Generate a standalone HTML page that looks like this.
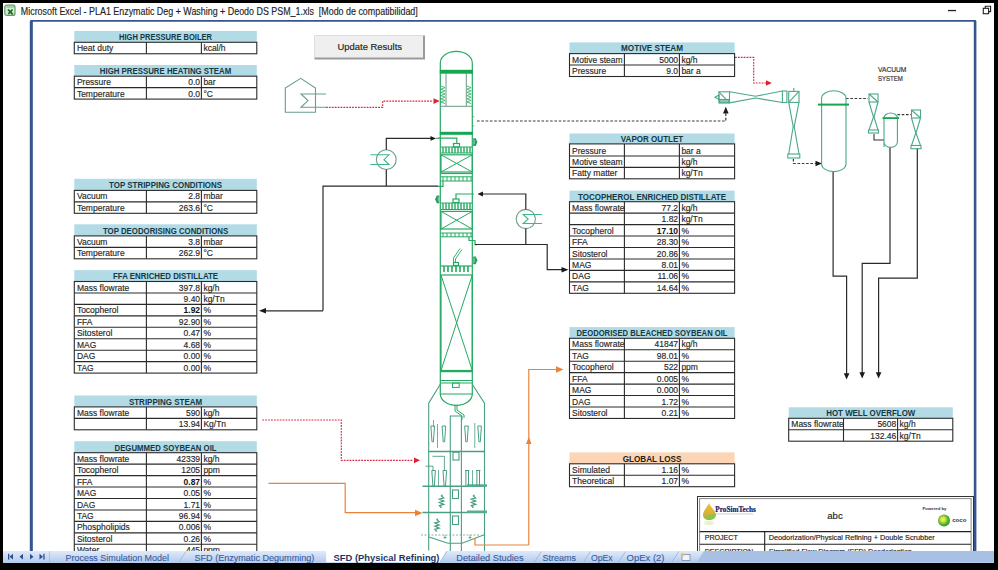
<!DOCTYPE html>
<html><head><meta charset="utf-8"><style>
html,body{margin:0;padding:0;background:#000;width:998px;height:570px;overflow:hidden}
svg{position:absolute;left:0;top:0;display:block}
.t{font-family:"Liberation Sans",sans-serif;fill:#262626;stroke:#262626;stroke-width:0.15px}
.tb{font-family:"Liberation Sans",sans-serif;fill:#111;font-weight:bold}
.h{font-family:"Liberation Sans",sans-serif;font-weight:bold}
</style></head><body>
<svg width="998" height="570" viewBox="0 0 998 570">
<rect x="0" y="0" width="998" height="570" fill="#000"/>
<rect x="3" y="3" width="991" height="560" fill="#fff"/>
<text x="20.8" y="14.8" class="t" style="font-size:10.4px;fill:#1a1a1a;white-space:pre" textLength="397" lengthAdjust="spacingAndGlyphs">Microsoft Excel - PLA1 Enzymatic Deg + Washing + Deodo DS PSM_1.xls  [Modo de compatibilidad]</text>
<rect x="4.8" y="5.2" width="10.2" height="10.2" rx="2" fill="#d2ecd0" stroke="#5f9f62" stroke-width="1.2"/>
<path d="M6.5 7 H14" stroke="#7ab47c" stroke-width="1"/><path d="M8 9.5 L12.8 14.3 M12.5 9.5 L8.3 14" stroke="#1f5f26" stroke-width="1.7"/>
<rect x="948" y="9.9" width="8" height="1.3" fill="#222"/>
<rect x="983.3" y="8.3" width="5.3" height="5.4" fill="none" stroke="#222" stroke-width="1.1"/>
<path d="M985.3 8.3 V6.3 H990.6 V11.6 H988.6" fill="none" stroke="#222" stroke-width="1.1"/>
<path d="M31.3 551 V20.8 H975 V551" fill="none" stroke="#34568e" stroke-width="1.8"/>
<rect x="29.8" y="20.8" width="3" height="531" fill="#34568e"/>
<rect x="973.8" y="20.8" width="2.6" height="531" fill="#34568e"/>
<rect x="74.3" y="30.9" width="182.5" height="11.399999999999999" fill="#b2dbe6"/>
<text x="165.55" y="40.099999999999994" text-anchor="middle" class="h" style="font-size:8.9px" fill="#163845" textLength="93" lengthAdjust="spacingAndGlyphs">HIGH PRESSURE BOILER</text>
<rect x="74.3" y="42.3" width="182.5" height="11.450000000000003" fill="#fff" stroke="#2b2b2b" stroke-width="1.1"/>
<line x1="146.4" y1="42.3" x2="146.4" y2="53.75" stroke="#2b2b2b" stroke-width="1.1"/>
<line x1="201.4" y1="42.3" x2="201.4" y2="53.75" stroke="#2b2b2b" stroke-width="1.1"/>
<text x="76.89999999999999" y="51.35" class="t" style="font-size:9.0px" textLength="36.38" lengthAdjust="spacingAndGlyphs">Heat duty</text>
<text x="203.4" y="51.35" class="t" style="font-size:9.0px" textLength="22.2" lengthAdjust="spacingAndGlyphs">kcal/h</text>
<rect x="74.3" y="65" width="182.5" height="11.200000000000003" fill="#b2dbe6"/>
<text x="165.55" y="74.0" text-anchor="middle" class="h" style="font-size:8.9px" fill="#163845" textLength="131.5" lengthAdjust="spacingAndGlyphs">HIGH PRESSURE HEATING STEAM</text>
<rect x="74.3" y="76.2" width="182.5" height="22.89999999999999" fill="#fff" stroke="#2b2b2b" stroke-width="1.1"/>
<line x1="74.3" y1="87.65" x2="256.8" y2="87.65" stroke="#2b2b2b" stroke-width="1.1"/>
<line x1="146.4" y1="76.2" x2="146.4" y2="99.1" stroke="#2b2b2b" stroke-width="1.1"/>
<line x1="201.4" y1="76.2" x2="201.4" y2="99.1" stroke="#2b2b2b" stroke-width="1.1"/>
<text x="76.89999999999999" y="85.25" class="t" style="font-size:9.0px" textLength="34.01" lengthAdjust="spacingAndGlyphs">Pressure</text>
<text x="200.1" y="85.25" text-anchor="end" class="t" style="font-size:9.0px" textLength="11.82" lengthAdjust="spacingAndGlyphs">0.0</text>
<text x="203.4" y="85.25" class="t" style="font-size:9.0px" textLength="12.29" lengthAdjust="spacingAndGlyphs">bar</text>
<text x="76.89999999999999" y="96.69999999999999" class="t" style="font-size:9.0px" textLength="47.72" lengthAdjust="spacingAndGlyphs">Temperature</text>
<text x="200.1" y="96.69999999999999" text-anchor="end" class="t" style="font-size:9.0px" textLength="11.82" lengthAdjust="spacingAndGlyphs">0.0</text>
<text x="203.4" y="96.69999999999999" class="t" style="font-size:9.0px" textLength="9.54" lengthAdjust="spacingAndGlyphs">°C</text>
<rect x="74.3" y="178.8" width="182.5" height="11.599999999999994" fill="#b2dbe6"/>
<text x="165.55" y="188.20000000000002" text-anchor="middle" class="h" style="font-size:8.9px" fill="#163845" textLength="113" lengthAdjust="spacingAndGlyphs">TOP STRIPPING CONDITIONS</text>
<rect x="74.3" y="190.4" width="182.5" height="22.900000000000006" fill="#fff" stroke="#2b2b2b" stroke-width="1.1"/>
<line x1="74.3" y1="201.85" x2="256.8" y2="201.85" stroke="#2b2b2b" stroke-width="1.1"/>
<line x1="146.4" y1="190.4" x2="146.4" y2="213.3" stroke="#2b2b2b" stroke-width="1.1"/>
<line x1="201.4" y1="190.4" x2="201.4" y2="213.3" stroke="#2b2b2b" stroke-width="1.1"/>
<text x="76.89999999999999" y="199.45" class="t" style="font-size:9.0px" textLength="30.55" lengthAdjust="spacingAndGlyphs">Vacuum</text>
<text x="200.1" y="199.45" text-anchor="end" class="t" style="font-size:9.0px" textLength="11.82" lengthAdjust="spacingAndGlyphs">2.8</text>
<text x="203.4" y="199.45" class="t" style="font-size:9.0px" textLength="19.37" lengthAdjust="spacingAndGlyphs">mbar</text>
<text x="76.89999999999999" y="210.9" class="t" style="font-size:9.0px" textLength="47.72" lengthAdjust="spacingAndGlyphs">Temperature</text>
<text x="200.1" y="210.9" text-anchor="end" class="t" style="font-size:9.0px" textLength="21.27" lengthAdjust="spacingAndGlyphs">263.6</text>
<text x="203.4" y="210.9" class="t" style="font-size:9.0px" textLength="9.54" lengthAdjust="spacingAndGlyphs">°C</text>
<rect x="74.3" y="224.3" width="182.5" height="11.599999999999994" fill="#b2dbe6"/>
<text x="165.55" y="233.70000000000002" text-anchor="middle" class="h" style="font-size:8.9px" fill="#163845" textLength="125.3" lengthAdjust="spacingAndGlyphs">TOP DEODORISING CONDITIONS</text>
<rect x="74.3" y="235.9" width="182.5" height="22.900000000000006" fill="#fff" stroke="#2b2b2b" stroke-width="1.1"/>
<line x1="74.3" y1="247.35" x2="256.8" y2="247.35" stroke="#2b2b2b" stroke-width="1.1"/>
<line x1="146.4" y1="235.9" x2="146.4" y2="258.8" stroke="#2b2b2b" stroke-width="1.1"/>
<line x1="201.4" y1="235.9" x2="201.4" y2="258.8" stroke="#2b2b2b" stroke-width="1.1"/>
<text x="76.89999999999999" y="244.95" class="t" style="font-size:9.0px" textLength="30.55" lengthAdjust="spacingAndGlyphs">Vacuum</text>
<text x="200.1" y="244.95" text-anchor="end" class="t" style="font-size:9.0px" textLength="11.82" lengthAdjust="spacingAndGlyphs">3.8</text>
<text x="203.4" y="244.95" class="t" style="font-size:9.0px" textLength="19.37" lengthAdjust="spacingAndGlyphs">mbar</text>
<text x="76.89999999999999" y="256.40000000000003" class="t" style="font-size:9.0px" textLength="47.72" lengthAdjust="spacingAndGlyphs">Temperature</text>
<text x="200.1" y="256.40000000000003" text-anchor="end" class="t" style="font-size:9.0px" textLength="21.27" lengthAdjust="spacingAndGlyphs">262.9</text>
<text x="203.4" y="256.40000000000003" class="t" style="font-size:9.0px" textLength="9.54" lengthAdjust="spacingAndGlyphs">°C</text>
<rect x="74.3" y="270.1" width="182.5" height="11.399999999999977" fill="#b2dbe6"/>
<text x="165.55" y="279.3" text-anchor="middle" class="h" style="font-size:8.9px" fill="#163845" textLength="105" lengthAdjust="spacingAndGlyphs">FFA ENRICHED DISTILLATE</text>
<rect x="74.3" y="281.5" width="182.5" height="91.60000000000002" fill="#fff" stroke="#2b2b2b" stroke-width="1.1"/>
<line x1="74.3" y1="292.95" x2="256.8" y2="292.95" stroke="#2b2b2b" stroke-width="1.1"/>
<line x1="74.3" y1="304.4" x2="256.8" y2="304.4" stroke="#2b2b2b" stroke-width="1.1"/>
<line x1="74.3" y1="315.85" x2="256.8" y2="315.85" stroke="#2b2b2b" stroke-width="1.1"/>
<line x1="74.3" y1="327.3" x2="256.8" y2="327.3" stroke="#2b2b2b" stroke-width="1.1"/>
<line x1="74.3" y1="338.75" x2="256.8" y2="338.75" stroke="#2b2b2b" stroke-width="1.1"/>
<line x1="74.3" y1="350.2" x2="256.8" y2="350.2" stroke="#2b2b2b" stroke-width="1.1"/>
<line x1="74.3" y1="361.65" x2="256.8" y2="361.65" stroke="#2b2b2b" stroke-width="1.1"/>
<line x1="146.4" y1="281.5" x2="146.4" y2="373.1" stroke="#2b2b2b" stroke-width="1.1"/>
<line x1="201.4" y1="281.5" x2="201.4" y2="373.1" stroke="#2b2b2b" stroke-width="1.1"/>
<text x="76.89999999999999" y="290.55" class="t" style="font-size:9.0px" textLength="52.43" lengthAdjust="spacingAndGlyphs">Mass flowrate</text>
<text x="200.1" y="290.55" text-anchor="end" class="t" style="font-size:9.0px" textLength="21.27" lengthAdjust="spacingAndGlyphs">397.8</text>
<text x="203.4" y="290.55" class="t" style="font-size:9.0px" textLength="16.07" lengthAdjust="spacingAndGlyphs">kg/h</text>
<text x="200.1" y="302.0" text-anchor="end" class="t" style="font-size:9.0px" textLength="16.54" lengthAdjust="spacingAndGlyphs">9.40</text>
<text x="203.4" y="302.0" class="t" style="font-size:9.0px" textLength="21.26" lengthAdjust="spacingAndGlyphs">kg/Tn</text>
<text x="76.89999999999999" y="313.45000000000005" class="t" style="font-size:9.0px" textLength="41.58" lengthAdjust="spacingAndGlyphs">Tocopherol</text>
<text x="200.1" y="313.45000000000005" text-anchor="end" class="tb" style="font-size:9.0px" textLength="16.54" lengthAdjust="spacingAndGlyphs">1.92</text>
<text x="203.4" y="313.45000000000005" class="t" style="font-size:9.0px" textLength="7.56" lengthAdjust="spacingAndGlyphs">%</text>
<text x="76.89999999999999" y="324.90000000000003" class="t" style="font-size:9.0px" textLength="15.58" lengthAdjust="spacingAndGlyphs">FFA</text>
<text x="200.1" y="324.90000000000003" text-anchor="end" class="t" style="font-size:9.0px" textLength="21.27" lengthAdjust="spacingAndGlyphs">92.90</text>
<text x="203.4" y="324.90000000000003" class="t" style="font-size:9.0px" textLength="7.56" lengthAdjust="spacingAndGlyphs">%</text>
<text x="76.89999999999999" y="336.35" class="t" style="font-size:9.0px" textLength="35.43" lengthAdjust="spacingAndGlyphs">Sitosterol</text>
<text x="200.1" y="336.35" text-anchor="end" class="t" style="font-size:9.0px" textLength="16.54" lengthAdjust="spacingAndGlyphs">0.47</text>
<text x="203.4" y="336.35" class="t" style="font-size:9.0px" textLength="7.56" lengthAdjust="spacingAndGlyphs">%</text>
<text x="76.89999999999999" y="347.8" class="t" style="font-size:9.0px" textLength="19.36" lengthAdjust="spacingAndGlyphs">MAG</text>
<text x="200.1" y="347.8" text-anchor="end" class="t" style="font-size:9.0px" textLength="16.54" lengthAdjust="spacingAndGlyphs">4.68</text>
<text x="203.4" y="347.8" class="t" style="font-size:9.0px" textLength="7.56" lengthAdjust="spacingAndGlyphs">%</text>
<text x="76.89999999999999" y="359.25" class="t" style="font-size:9.0px" textLength="18.42" lengthAdjust="spacingAndGlyphs">DAG</text>
<text x="200.1" y="359.25" text-anchor="end" class="t" style="font-size:9.0px" textLength="16.54" lengthAdjust="spacingAndGlyphs">0.00</text>
<text x="203.4" y="359.25" class="t" style="font-size:9.0px" textLength="7.56" lengthAdjust="spacingAndGlyphs">%</text>
<text x="76.89999999999999" y="370.70000000000005" class="t" style="font-size:9.0px" textLength="16.84" lengthAdjust="spacingAndGlyphs">TAG</text>
<text x="200.1" y="370.70000000000005" text-anchor="end" class="t" style="font-size:9.0px" textLength="16.54" lengthAdjust="spacingAndGlyphs">0.00</text>
<text x="203.4" y="370.70000000000005" class="t" style="font-size:9.0px" textLength="7.56" lengthAdjust="spacingAndGlyphs">%</text>
<rect x="74.3" y="395.5" width="182.5" height="11.399999999999977" fill="#b2dbe6"/>
<text x="165.55" y="404.7" text-anchor="middle" class="h" style="font-size:8.9px" fill="#163845" textLength="73.3" lengthAdjust="spacingAndGlyphs">STRIPPING STEAM</text>
<rect x="74.3" y="406.9" width="182.5" height="22.899999999999977" fill="#fff" stroke="#2b2b2b" stroke-width="1.1"/>
<line x1="74.3" y1="418.34999999999997" x2="256.8" y2="418.34999999999997" stroke="#2b2b2b" stroke-width="1.1"/>
<line x1="146.4" y1="406.9" x2="146.4" y2="429.79999999999995" stroke="#2b2b2b" stroke-width="1.1"/>
<line x1="201.4" y1="406.9" x2="201.4" y2="429.79999999999995" stroke="#2b2b2b" stroke-width="1.1"/>
<text x="76.89999999999999" y="415.95" class="t" style="font-size:9.0px" textLength="52.43" lengthAdjust="spacingAndGlyphs">Mass flowrate</text>
<text x="200.1" y="415.95" text-anchor="end" class="t" style="font-size:9.0px" textLength="14.18" lengthAdjust="spacingAndGlyphs">590</text>
<text x="203.4" y="415.95" class="t" style="font-size:9.0px" textLength="16.07" lengthAdjust="spacingAndGlyphs">kg/h</text>
<text x="200.1" y="427.4" text-anchor="end" class="t" style="font-size:9.0px" textLength="21.27" lengthAdjust="spacingAndGlyphs">13.94</text>
<text x="203.4" y="427.4" class="t" style="font-size:9.0px" textLength="22.68" lengthAdjust="spacingAndGlyphs">Kg/Tn</text>
<rect x="74.3" y="441.2" width="182.5" height="11.5" fill="#b2dbe6"/>
<text x="165.55" y="450.5" text-anchor="middle" class="h" style="font-size:8.9px" fill="#163845" textLength="102" lengthAdjust="spacingAndGlyphs">DEGUMMED SOYBEAN OIL</text>
<rect x="74.3" y="452.7" width="182.5" height="103.05000000000001" fill="#fff" stroke="#2b2b2b" stroke-width="1.1"/>
<line x1="74.3" y1="464.15" x2="256.8" y2="464.15" stroke="#2b2b2b" stroke-width="1.1"/>
<line x1="74.3" y1="475.59999999999997" x2="256.8" y2="475.59999999999997" stroke="#2b2b2b" stroke-width="1.1"/>
<line x1="74.3" y1="487.04999999999995" x2="256.8" y2="487.04999999999995" stroke="#2b2b2b" stroke-width="1.1"/>
<line x1="74.3" y1="498.5" x2="256.8" y2="498.5" stroke="#2b2b2b" stroke-width="1.1"/>
<line x1="74.3" y1="509.95" x2="256.8" y2="509.95" stroke="#2b2b2b" stroke-width="1.1"/>
<line x1="74.3" y1="521.4" x2="256.8" y2="521.4" stroke="#2b2b2b" stroke-width="1.1"/>
<line x1="74.3" y1="532.85" x2="256.8" y2="532.85" stroke="#2b2b2b" stroke-width="1.1"/>
<line x1="74.3" y1="544.3" x2="256.8" y2="544.3" stroke="#2b2b2b" stroke-width="1.1"/>
<line x1="146.4" y1="452.7" x2="146.4" y2="555.75" stroke="#2b2b2b" stroke-width="1.1"/>
<line x1="201.4" y1="452.7" x2="201.4" y2="555.75" stroke="#2b2b2b" stroke-width="1.1"/>
<text x="76.89999999999999" y="461.75" class="t" style="font-size:9.0px" textLength="52.43" lengthAdjust="spacingAndGlyphs">Mass flowrate</text>
<text x="200.1" y="461.75" text-anchor="end" class="t" style="font-size:9.0px" textLength="23.64" lengthAdjust="spacingAndGlyphs">42339</text>
<text x="203.4" y="461.75" class="t" style="font-size:9.0px" textLength="16.07" lengthAdjust="spacingAndGlyphs">kg/h</text>
<text x="76.89999999999999" y="473.2" class="t" style="font-size:9.0px" textLength="41.58" lengthAdjust="spacingAndGlyphs">Tocopherol</text>
<text x="200.1" y="473.2" text-anchor="end" class="t" style="font-size:9.0px" textLength="18.91" lengthAdjust="spacingAndGlyphs">1205</text>
<text x="203.4" y="473.2" class="t" style="font-size:9.0px" textLength="16.54" lengthAdjust="spacingAndGlyphs">ppm</text>
<text x="76.89999999999999" y="484.65" class="t" style="font-size:9.0px" textLength="15.58" lengthAdjust="spacingAndGlyphs">FFA</text>
<text x="200.1" y="484.65" text-anchor="end" class="tb" style="font-size:9.0px" textLength="16.54" lengthAdjust="spacingAndGlyphs">0.87</text>
<text x="203.4" y="484.65" class="t" style="font-size:9.0px" textLength="7.56" lengthAdjust="spacingAndGlyphs">%</text>
<text x="76.89999999999999" y="496.1" class="t" style="font-size:9.0px" textLength="19.36" lengthAdjust="spacingAndGlyphs">MAG</text>
<text x="200.1" y="496.1" text-anchor="end" class="t" style="font-size:9.0px" textLength="16.54" lengthAdjust="spacingAndGlyphs">0.05</text>
<text x="203.4" y="496.1" class="t" style="font-size:9.0px" textLength="7.56" lengthAdjust="spacingAndGlyphs">%</text>
<text x="76.89999999999999" y="507.55" class="t" style="font-size:9.0px" textLength="18.42" lengthAdjust="spacingAndGlyphs">DAG</text>
<text x="200.1" y="507.55" text-anchor="end" class="t" style="font-size:9.0px" textLength="16.54" lengthAdjust="spacingAndGlyphs">1.71</text>
<text x="203.4" y="507.55" class="t" style="font-size:9.0px" textLength="7.56" lengthAdjust="spacingAndGlyphs">%</text>
<text x="76.89999999999999" y="519.0" class="t" style="font-size:9.0px" textLength="16.84" lengthAdjust="spacingAndGlyphs">TAG</text>
<text x="200.1" y="519.0" text-anchor="end" class="t" style="font-size:9.0px" textLength="21.27" lengthAdjust="spacingAndGlyphs">96.94</text>
<text x="203.4" y="519.0" class="t" style="font-size:9.0px" textLength="7.56" lengthAdjust="spacingAndGlyphs">%</text>
<text x="76.89999999999999" y="530.45" class="t" style="font-size:9.0px" textLength="52.93" lengthAdjust="spacingAndGlyphs">Phospholipids</text>
<text x="200.1" y="530.45" text-anchor="end" class="t" style="font-size:9.0px" textLength="21.27" lengthAdjust="spacingAndGlyphs">0.006</text>
<text x="203.4" y="530.45" class="t" style="font-size:9.0px" textLength="7.56" lengthAdjust="spacingAndGlyphs">%</text>
<text x="76.89999999999999" y="541.9" class="t" style="font-size:9.0px" textLength="35.43" lengthAdjust="spacingAndGlyphs">Sitosterol</text>
<text x="200.1" y="541.9" text-anchor="end" class="t" style="font-size:9.0px" textLength="16.54" lengthAdjust="spacingAndGlyphs">0.26</text>
<text x="203.4" y="541.9" class="t" style="font-size:9.0px" textLength="7.56" lengthAdjust="spacingAndGlyphs">%</text>
<text x="76.89999999999999" y="553.35" class="t" style="font-size:9.0px" textLength="22.35" lengthAdjust="spacingAndGlyphs">Water</text>
<text x="200.1" y="553.35" text-anchor="end" class="t" style="font-size:9.0px" textLength="14.18" lengthAdjust="spacingAndGlyphs">445</text>
<text x="203.4" y="553.35" class="t" style="font-size:9.0px" textLength="16.54" lengthAdjust="spacingAndGlyphs">ppm</text>
<rect x="569.5" y="42.4" width="165.10000000000002" height="11.200000000000003" fill="#b2dbe6"/>
<text x="652.05" y="51.4" text-anchor="middle" class="h" style="font-size:8.9px" fill="#163845" textLength="62" lengthAdjust="spacingAndGlyphs">MOTIVE STEAM</text>
<rect x="569.5" y="53.6" width="165.10000000000002" height="22.9" fill="#fff" stroke="#2b2b2b" stroke-width="1.1"/>
<line x1="569.5" y1="65.05" x2="734.6" y2="65.05" stroke="#2b2b2b" stroke-width="1.1"/>
<line x1="624.4" y1="53.6" x2="624.4" y2="76.5" stroke="#2b2b2b" stroke-width="1.1"/>
<line x1="679.4" y1="53.6" x2="679.4" y2="76.5" stroke="#2b2b2b" stroke-width="1.1"/>
<text x="572.1" y="62.65" class="t" style="font-size:9.0px" textLength="50.54" lengthAdjust="spacingAndGlyphs">Motive steam</text>
<text x="678.1" y="62.65" text-anchor="end" class="t" style="font-size:9.0px" textLength="18.91" lengthAdjust="spacingAndGlyphs">5000</text>
<text x="681.4" y="62.65" class="t" style="font-size:9.0px" textLength="16.07" lengthAdjust="spacingAndGlyphs">kg/h</text>
<text x="572.1" y="74.1" class="t" style="font-size:9.0px" textLength="34.01" lengthAdjust="spacingAndGlyphs">Pressure</text>
<text x="678.1" y="74.1" text-anchor="end" class="t" style="font-size:9.0px" textLength="11.82" lengthAdjust="spacingAndGlyphs">9.0</text>
<text x="681.4" y="74.1" class="t" style="font-size:9.0px" textLength="19.37" lengthAdjust="spacingAndGlyphs">bar a</text>
<rect x="569.5" y="133.5" width="165.10000000000002" height="10.400000000000006" fill="#b2dbe6"/>
<text x="652.05" y="141.70000000000002" text-anchor="middle" class="h" style="font-size:8.9px" fill="#163845" textLength="62.5" lengthAdjust="spacingAndGlyphs">VAPOR OUTLET</text>
<rect x="569.5" y="143.9" width="165.10000000000002" height="34.900000000000006" fill="#fff" stroke="#2b2b2b" stroke-width="1.1"/>
<line x1="569.5" y1="156" x2="734.6" y2="156" stroke="#2b2b2b" stroke-width="1.1"/>
<line x1="569.5" y1="167.4" x2="734.6" y2="167.4" stroke="#2b2b2b" stroke-width="1.1"/>
<line x1="624.4" y1="143.9" x2="624.4" y2="178.8" stroke="#2b2b2b" stroke-width="1.1"/>
<line x1="679.4" y1="143.9" x2="679.4" y2="178.8" stroke="#2b2b2b" stroke-width="1.1"/>
<text x="572.1" y="153.6" class="t" style="font-size:9.0px" textLength="34.01" lengthAdjust="spacingAndGlyphs">Pressure</text>
<text x="681.4" y="153.6" class="t" style="font-size:9.0px" textLength="19.37" lengthAdjust="spacingAndGlyphs">bar a</text>
<text x="572.1" y="165.0" class="t" style="font-size:9.0px" textLength="50.54" lengthAdjust="spacingAndGlyphs">Motive steam</text>
<text x="681.4" y="165.0" class="t" style="font-size:9.0px" textLength="16.07" lengthAdjust="spacingAndGlyphs">kg/h</text>
<text x="572.1" y="176.4" class="t" style="font-size:9.0px" textLength="45.34" lengthAdjust="spacingAndGlyphs">Fatty matter</text>
<text x="681.4" y="176.4" class="t" style="font-size:9.0px" textLength="21.26" lengthAdjust="spacingAndGlyphs">kg/Tn</text>
<rect x="569.5" y="190.6" width="165.10000000000002" height="11.099999999999994" fill="#b2dbe6"/>
<text x="652.05" y="199.5" text-anchor="middle" class="h" style="font-size:8.9px" fill="#163845" textLength="148" lengthAdjust="spacingAndGlyphs">TOCOPHEROL  ENRICHED DISTILLATE</text>
<rect x="569.5" y="201.7" width="165.10000000000002" height="91.59999999999997" fill="#fff" stroke="#2b2b2b" stroke-width="1.1"/>
<line x1="569.5" y1="213.14999999999998" x2="734.6" y2="213.14999999999998" stroke="#2b2b2b" stroke-width="1.1"/>
<line x1="569.5" y1="224.6" x2="734.6" y2="224.6" stroke="#2b2b2b" stroke-width="1.1"/>
<line x1="569.5" y1="236.04999999999998" x2="734.6" y2="236.04999999999998" stroke="#2b2b2b" stroke-width="1.1"/>
<line x1="569.5" y1="247.5" x2="734.6" y2="247.5" stroke="#2b2b2b" stroke-width="1.1"/>
<line x1="569.5" y1="258.95" x2="734.6" y2="258.95" stroke="#2b2b2b" stroke-width="1.1"/>
<line x1="569.5" y1="270.4" x2="734.6" y2="270.4" stroke="#2b2b2b" stroke-width="1.1"/>
<line x1="569.5" y1="281.84999999999997" x2="734.6" y2="281.84999999999997" stroke="#2b2b2b" stroke-width="1.1"/>
<line x1="624.4" y1="201.7" x2="624.4" y2="293.29999999999995" stroke="#2b2b2b" stroke-width="1.1"/>
<line x1="679.4" y1="201.7" x2="679.4" y2="293.29999999999995" stroke="#2b2b2b" stroke-width="1.1"/>
<text x="572.1" y="210.74999999999997" class="t" style="font-size:9.0px" textLength="52.43" lengthAdjust="spacingAndGlyphs">Mass flowrate</text>
<text x="678.1" y="210.74999999999997" text-anchor="end" class="t" style="font-size:9.0px" textLength="16.54" lengthAdjust="spacingAndGlyphs">77.2</text>
<text x="681.4" y="210.74999999999997" class="t" style="font-size:9.0px" textLength="16.07" lengthAdjust="spacingAndGlyphs">kg/h</text>
<text x="678.1" y="222.2" text-anchor="end" class="t" style="font-size:9.0px" textLength="16.54" lengthAdjust="spacingAndGlyphs">1.82</text>
<text x="681.4" y="222.2" class="t" style="font-size:9.0px" textLength="21.26" lengthAdjust="spacingAndGlyphs">kg/Tn</text>
<text x="572.1" y="233.64999999999998" class="t" style="font-size:9.0px" textLength="41.58" lengthAdjust="spacingAndGlyphs">Tocopherol</text>
<text x="678.1" y="233.64999999999998" text-anchor="end" class="tb" style="font-size:9.0px" textLength="21.27" lengthAdjust="spacingAndGlyphs">17.10</text>
<text x="681.4" y="233.64999999999998" class="t" style="font-size:9.0px" textLength="7.56" lengthAdjust="spacingAndGlyphs">%</text>
<text x="572.1" y="245.1" class="t" style="font-size:9.0px" textLength="15.58" lengthAdjust="spacingAndGlyphs">FFA</text>
<text x="678.1" y="245.1" text-anchor="end" class="t" style="font-size:9.0px" textLength="21.27" lengthAdjust="spacingAndGlyphs">28.30</text>
<text x="681.4" y="245.1" class="t" style="font-size:9.0px" textLength="7.56" lengthAdjust="spacingAndGlyphs">%</text>
<text x="572.1" y="256.55" class="t" style="font-size:9.0px" textLength="35.43" lengthAdjust="spacingAndGlyphs">Sitosterol</text>
<text x="678.1" y="256.55" text-anchor="end" class="t" style="font-size:9.0px" textLength="21.27" lengthAdjust="spacingAndGlyphs">20.86</text>
<text x="681.4" y="256.55" class="t" style="font-size:9.0px" textLength="7.56" lengthAdjust="spacingAndGlyphs">%</text>
<text x="572.1" y="268.0" class="t" style="font-size:9.0px" textLength="19.36" lengthAdjust="spacingAndGlyphs">MAG</text>
<text x="678.1" y="268.0" text-anchor="end" class="t" style="font-size:9.0px" textLength="16.54" lengthAdjust="spacingAndGlyphs">8.01</text>
<text x="681.4" y="268.0" class="t" style="font-size:9.0px" textLength="7.56" lengthAdjust="spacingAndGlyphs">%</text>
<text x="572.1" y="279.45" class="t" style="font-size:9.0px" textLength="18.42" lengthAdjust="spacingAndGlyphs">DAG</text>
<text x="678.1" y="279.45" text-anchor="end" class="t" style="font-size:9.0px" textLength="20.64" lengthAdjust="spacingAndGlyphs">11.06</text>
<text x="681.4" y="279.45" class="t" style="font-size:9.0px" textLength="7.56" lengthAdjust="spacingAndGlyphs">%</text>
<text x="572.1" y="290.9" class="t" style="font-size:9.0px" textLength="16.84" lengthAdjust="spacingAndGlyphs">TAG</text>
<text x="678.1" y="290.9" text-anchor="end" class="t" style="font-size:9.0px" textLength="21.27" lengthAdjust="spacingAndGlyphs">14.64</text>
<text x="681.4" y="290.9" class="t" style="font-size:9.0px" textLength="7.56" lengthAdjust="spacingAndGlyphs">%</text>
<rect x="569.5" y="327.1" width="165.10000000000002" height="11.199999999999989" fill="#b2dbe6"/>
<text x="652.05" y="336.1" text-anchor="middle" class="h" style="font-size:8.9px" fill="#163845" textLength="151" lengthAdjust="spacingAndGlyphs">DEODORISED BLEACHED SOYBEAN OIL</text>
<rect x="569.5" y="338.3" width="165.10000000000002" height="80.14999999999998" fill="#fff" stroke="#2b2b2b" stroke-width="1.1"/>
<line x1="569.5" y1="349.75" x2="734.6" y2="349.75" stroke="#2b2b2b" stroke-width="1.1"/>
<line x1="569.5" y1="361.2" x2="734.6" y2="361.2" stroke="#2b2b2b" stroke-width="1.1"/>
<line x1="569.5" y1="372.65" x2="734.6" y2="372.65" stroke="#2b2b2b" stroke-width="1.1"/>
<line x1="569.5" y1="384.1" x2="734.6" y2="384.1" stroke="#2b2b2b" stroke-width="1.1"/>
<line x1="569.5" y1="395.55" x2="734.6" y2="395.55" stroke="#2b2b2b" stroke-width="1.1"/>
<line x1="569.5" y1="407.0" x2="734.6" y2="407.0" stroke="#2b2b2b" stroke-width="1.1"/>
<line x1="624.4" y1="338.3" x2="624.4" y2="418.45" stroke="#2b2b2b" stroke-width="1.1"/>
<line x1="679.4" y1="338.3" x2="679.4" y2="418.45" stroke="#2b2b2b" stroke-width="1.1"/>
<text x="572.1" y="347.35" class="t" style="font-size:9.0px" textLength="52.43" lengthAdjust="spacingAndGlyphs">Mass flowrate</text>
<text x="678.1" y="347.35" text-anchor="end" class="t" style="font-size:9.0px" textLength="23.64" lengthAdjust="spacingAndGlyphs">41847</text>
<text x="681.4" y="347.35" class="t" style="font-size:9.0px" textLength="16.07" lengthAdjust="spacingAndGlyphs">kg/h</text>
<text x="572.1" y="358.8" class="t" style="font-size:9.0px" textLength="16.84" lengthAdjust="spacingAndGlyphs">TAG</text>
<text x="678.1" y="358.8" text-anchor="end" class="t" style="font-size:9.0px" textLength="21.27" lengthAdjust="spacingAndGlyphs">98.01</text>
<text x="681.4" y="358.8" class="t" style="font-size:9.0px" textLength="7.56" lengthAdjust="spacingAndGlyphs">%</text>
<text x="572.1" y="370.25" class="t" style="font-size:9.0px" textLength="41.58" lengthAdjust="spacingAndGlyphs">Tocopherol</text>
<text x="678.1" y="370.25" text-anchor="end" class="t" style="font-size:9.0px" textLength="14.18" lengthAdjust="spacingAndGlyphs">522</text>
<text x="681.4" y="370.25" class="t" style="font-size:9.0px" textLength="16.54" lengthAdjust="spacingAndGlyphs">ppm</text>
<text x="572.1" y="381.70000000000005" class="t" style="font-size:9.0px" textLength="15.58" lengthAdjust="spacingAndGlyphs">FFA</text>
<text x="678.1" y="381.70000000000005" text-anchor="end" class="t" style="font-size:9.0px" textLength="21.27" lengthAdjust="spacingAndGlyphs">0.005</text>
<text x="681.4" y="381.70000000000005" class="t" style="font-size:9.0px" textLength="7.56" lengthAdjust="spacingAndGlyphs">%</text>
<text x="572.1" y="393.15000000000003" class="t" style="font-size:9.0px" textLength="19.36" lengthAdjust="spacingAndGlyphs">MAG</text>
<text x="678.1" y="393.15000000000003" text-anchor="end" class="t" style="font-size:9.0px" textLength="21.27" lengthAdjust="spacingAndGlyphs">0.000</text>
<text x="681.4" y="393.15000000000003" class="t" style="font-size:9.0px" textLength="7.56" lengthAdjust="spacingAndGlyphs">%</text>
<text x="572.1" y="404.6" class="t" style="font-size:9.0px" textLength="18.42" lengthAdjust="spacingAndGlyphs">DAG</text>
<text x="678.1" y="404.6" text-anchor="end" class="t" style="font-size:9.0px" textLength="16.54" lengthAdjust="spacingAndGlyphs">1.72</text>
<text x="681.4" y="404.6" class="t" style="font-size:9.0px" textLength="7.56" lengthAdjust="spacingAndGlyphs">%</text>
<text x="572.1" y="416.05" class="t" style="font-size:9.0px" textLength="35.43" lengthAdjust="spacingAndGlyphs">Sitosterol</text>
<text x="678.1" y="416.05" text-anchor="end" class="t" style="font-size:9.0px" textLength="16.54" lengthAdjust="spacingAndGlyphs">0.21</text>
<text x="681.4" y="416.05" class="t" style="font-size:9.0px" textLength="7.56" lengthAdjust="spacingAndGlyphs">%</text>
<rect x="569.5" y="452.4" width="165.10000000000002" height="11.400000000000034" fill="#fbd5b5"/>
<text x="652.05" y="461.6" text-anchor="middle" class="h" style="font-size:8.9px" fill="#2a1a10" textLength="58.7" lengthAdjust="spacingAndGlyphs">GLOBAL LOSS</text>
<rect x="569.5" y="463.8" width="165.10000000000002" height="22.899999999999977" fill="#fff" stroke="#2b2b2b" stroke-width="1.1"/>
<line x1="569.5" y1="475.25" x2="734.6" y2="475.25" stroke="#2b2b2b" stroke-width="1.1"/>
<line x1="624.4" y1="463.8" x2="624.4" y2="486.7" stroke="#2b2b2b" stroke-width="1.1"/>
<line x1="679.4" y1="463.8" x2="679.4" y2="486.7" stroke="#2b2b2b" stroke-width="1.1"/>
<text x="572.1" y="472.85" class="t" style="font-size:9.0px" textLength="37.8" lengthAdjust="spacingAndGlyphs">Simulated</text>
<text x="678.1" y="472.85" text-anchor="end" class="t" style="font-size:9.0px" textLength="16.54" lengthAdjust="spacingAndGlyphs">1.16</text>
<text x="681.4" y="472.85" class="t" style="font-size:9.0px" textLength="7.56" lengthAdjust="spacingAndGlyphs">%</text>
<text x="572.1" y="484.3" class="t" style="font-size:9.0px" textLength="42.05" lengthAdjust="spacingAndGlyphs">Theoretical</text>
<text x="678.1" y="484.3" text-anchor="end" class="t" style="font-size:9.0px" textLength="16.54" lengthAdjust="spacingAndGlyphs">1.07</text>
<text x="681.4" y="484.3" class="t" style="font-size:9.0px" textLength="7.56" lengthAdjust="spacingAndGlyphs">%</text>
<rect x="788.7" y="407.3" width="164.0999999999999" height="11.0" fill="#b2dbe6"/>
<text x="870.75" y="416.1" text-anchor="middle" class="h" style="font-size:8.9px" fill="#163845" textLength="89" lengthAdjust="spacingAndGlyphs">HOT WELL OVERFLOW</text>
<rect x="788.7" y="418.3" width="164.0999999999999" height="22.899999999999977" fill="#fff" stroke="#2b2b2b" stroke-width="1.1"/>
<line x1="788.7" y1="429.75" x2="952.8" y2="429.75" stroke="#2b2b2b" stroke-width="1.1"/>
<line x1="843.5" y1="418.3" x2="843.5" y2="441.2" stroke="#2b2b2b" stroke-width="1.1"/>
<line x1="897.6" y1="418.3" x2="897.6" y2="441.2" stroke="#2b2b2b" stroke-width="1.1"/>
<text x="791.3000000000001" y="427.35" class="t" style="font-size:9.0px" textLength="52.43" lengthAdjust="spacingAndGlyphs">Mass flowrate</text>
<text x="896.3000000000001" y="427.35" text-anchor="end" class="t" style="font-size:9.0px" textLength="18.91" lengthAdjust="spacingAndGlyphs">5608</text>
<text x="899.6" y="427.35" class="t" style="font-size:9.0px" textLength="16.07" lengthAdjust="spacingAndGlyphs">kg/h</text>
<text x="896.3000000000001" y="438.8" text-anchor="end" class="t" style="font-size:9.0px" textLength="26.0" lengthAdjust="spacingAndGlyphs">132.46</text>
<text x="899.6" y="438.8" class="t" style="font-size:9.0px" textLength="21.26" lengthAdjust="spacingAndGlyphs">kg/Tn</text>
<rect x="314.5" y="35.5" width="110.5" height="24" fill="#9a9a9a"/>
<rect x="314.5" y="35.5" width="108.5" height="22" fill="#efefef"/>
<text x="337.5" y="50.3" class="t" style="font-size:9.8px;fill:#1a1a1a" textLength="64.5" lengthAdjust="spacingAndGlyphs">Update Results</text>
<g fill="none" stroke="#24aa62" stroke-width="1.2">
<path d="M440.3 384 V63 A16 11.6 0 0 1 472.3 63 V384"/>
<path d="M446 73.7 V106.3 M466.3 73.7 V106.3 M440.3 106.3 H472.3" stroke="#6a9a80" stroke-width="1"/>
<path d="M441 86 l4 1.6 l-4 1.6 l4 1.6 l-4 1.6 l4 1.6 l-4 1.6 l4 1.6 l-4 1.6 l4 1.6 l-4 1.6 l4 1.6" stroke-width="0.8"/>
<path d="M467 86 l4 1.6 l-4 1.6 l4 1.6 l-4 1.6 l4 1.6 l-4 1.6 l4 1.6 l-4 1.6 l4 1.6 l-4 1.6 l4 1.6" stroke-width="0.8"/>
<path d="M472.3 116.7 h2 M472.3 126 h2" stroke-width="0.8"/>
<path d="M438 138.2 H456.8 V143.5"/>
<rect x="453.5" y="143.5" width="6" height="3.5"/>
<path d="M441 147 H472 M441 153 H472"/>
<path d="M443 147 V153 M446 147 V153 M449 147 V153 M452 147 V153 M455 147 V153 M458 147 V153 M461 147 V153 M464 147 V153 M467 147 V153 M470 147 V153" stroke-width="1.4"/>
<rect x="441" y="154.8" width="31.3" height="17.2"/>
<path d="M441 154.8 L472.3 172 M472.3 154.8 L441 172" stroke-width="1"/>
<path d="M441 173.5 H472.3"/>
<path d="M441 176.8 H472 M441 181 H472" stroke-width="1"/>
<path d="M443 176.8 V181 M447 176.8 V181 M451 176.8 V181 M455 176.8 V181 M459 176.8 V181 M463 176.8 V181 M467 176.8 V181 M471 176.8 V181" stroke-width="1"/>
<path d="M443 181 V186.4 H438" />
<path d="M474 194 H456 V199"/>
<rect x="453" y="199" width="6" height="3.5"/>
<path d="M441 203 H472 M441 209.5 H472"/>
<path d="M443 203 V209.5 M446 203 V209.5 M449 203 V209.5 M452 203 V209.5 M455 203 V209.5 M458 203 V209.5 M461 203 V209.5 M464 203 V209.5 M467 203 V209.5 M470 203 V209.5" stroke-width="1.4"/>
<rect x="441" y="211.4" width="31.3" height="17.6"/>
<path d="M441 211.4 L472.3 229 M472.3 211.4 L441 229" stroke-width="1"/>
<path d="M441 233 H472 M441 236.8 H472" stroke-width="1"/>
<path d="M443 233 V236.8 M447 233 V236.8 M451 233 V236.8 M455 233 V236.8 M459 233 V236.8 M463 233 V236.8 M467 233 V236.8 M471 233 V236.8" stroke-width="1"/>
<path d="M469 236.8 V240.5 H475 V244.7 H477" />
<path d="M453.5 263 V258 L460 248.5 M455.5 263 V259 L462 249.5" stroke-width="0.9"/>
<rect x="453.5" y="262.5" width="5" height="3"/>
<path d="M441 266 H472"/>
<path d="M444 266 V272 M448 266 V272 M452 266 V272 M456 266 V272 M460 266 V272 M464 266 V272 M468 266 V272" stroke-width="1.6"/>
<rect x="441" y="275" width="31.3" height="95.5"/>
<path d="M441 275 L472.3 370.5 M472.3 275 L441 370.5" stroke-width="1"/>
<path d="M440.3 371.2 H472.3" stroke-width="2.2"/>
<path d="M440.3 380.5 H472.3 M440.3 383 H472.3 M440.3 394 H472.3" stroke-width="1.2"/>
<rect x="452.5" y="383" width="6.7" height="4.4" stroke-width="1"/>
<path d="M440.3 384 V394 A16 11.3 0 0 0 472.3 394 V384"/>
<path d="M455 405.3 V411 L462 416 V420" stroke-width="1"/>
<path d="M457 405.3 V410 L464 415 V418" stroke-width="1"/>
</g>
<rect x="439.8" y="69.8" width="33" height="3.9" fill="#14a650"/>
<rect x="439.8" y="131.8" width="33" height="3" fill="#14a650"/>
<path d="M473.2 138.3 H475.7 L477.4 142.0 L475.7 146.10000000000002 H473.2 Z" fill="#2f9a62"/>
<path d="M474.2 139.8 V144.3" stroke="#9ad8b8" stroke-width="0.8"/>
<path d="M473.2 256.5 H475.7 L477.4 260.2 L475.7 264.3 H473.2 Z" fill="#2f9a62"/>
<path d="M474.2 258.0 V262.5" stroke="#9ad8b8" stroke-width="0.8"/>
<path d="M439.3 195.5 H436.8 L435.1 199.2 L436.8 203.3 H439.3 Z" fill="#2f9a62"/>
<path d="M438.3 197.0 V201.5" stroke="#9ad8b8" stroke-width="0.8"/>
<g fill="none" stroke="#4a9f82" stroke-width="1.1">
<path d="M440.3 384.2 L428.7 403.2 V552 M472.3 384.2 L484.5 403.2 V552"/>
<path d="M450.3 552 V416 H461.4 V552"/>
<path d="M428.7 451.5 H484.5 M422.5 486.3 H486 M422.5 512.5 H487" stroke-width="1.6"/>
<path d="M467 485.5 H487 M467 511.8 H487" stroke-width="2.5" stroke="#5aae8c"/>
<rect x="453" y="452.2" width="6" height="7.8"/>
<rect x="452.5" y="490" width="6" height="8.5"/>
<rect x="452.5" y="516" width="6" height="8.5"/>
<path d="M430.9 426 H434.5 L433.4 441.8 H432.0 Z" stroke-width="1"/>
<path d="M442.09999999999997 426 H445.7 L444.59999999999997 441.8 H443.2 Z" stroke-width="1"/>
<path d="M464.7 426 H468.3 L467.2 441.8 H465.8 Z" stroke-width="1"/>
<path d="M477.8 426 H481.40000000000003 L480.3 441.8 H478.90000000000003 Z" stroke-width="1"/>
<path d="M437.5 424 V448 M474.8 423 V448 M433.5 420 V427" stroke-width="0.8"/>
<path d="M431.8 470.5 H435.40000000000003 L434.3 486 H432.90000000000003 Z" stroke-width="1"/>
<path d="M443.0 470.5 H446.6 L445.5 486 H444.1 Z" stroke-width="1"/>
<path d="M465.0 470.5 H469.4 M465.9 470.5 V486 M468.5 470.5 V486" stroke-width="1"/>
<path d="M476.0 470.5 H480.4 M476.9 470.5 V486 M479.5 470.5 V486" stroke-width="1"/>
<path d="M438.5 470 V486 M472.5 470 V486" stroke-width="0.8"/>
<path d="M432.5 456.3 H444.4 V470 M425.5 466.2 H433 V470" stroke-width="0.9"/>
<path d="M442.5 494.7 l-1 1.2 l2.2 2 l-4.2 1.2 l4.2 2 l-4.2 1.2 l4.2 2 l-4.2 1.2 l2 2.2" stroke-width="1.3"/>
<path d="M474.4 494.7 l-1 1.2 l2.2 2 l-4.2 1.2 l4.2 2 l-4.2 1.2 l4.2 2 l-4.2 1.2 l2 2.2" stroke-width="1.3"/>
<path d="M437.9 518.6 l-1 1.2 l2.2 2 l-4.2 1.2 l4.2 2 l-4.2 1.2 l4.2 2 l-4.2 1.2 l2 2.2" stroke-width="1.3"/>
<path d="M421 535 H480" stroke-dasharray="2 1.5" stroke-width="0.9" stroke="#6fb090"/>
<path d="M429 537 L448 543.2 H462 L484.9 534.6" stroke-width="1.1"/>
<path d="M445 535 V539 M443.5 537.5 H446.5 M470 535 V539 M468.5 537.5 H471.5" stroke-width="0.8"/>
</g>
<g fill="none" stroke="#6a9f88" stroke-width="1.1">
<path d="M285.3 112.3 V88 L300.7 78.4 L315.5 88 V112.3 Z"/>
<path d="M326 94 H301 L308 100.6 L301 107.3 H326"/>
</g>
<circle cx="386.3" cy="159.6" r="9.9" fill="none" stroke="#6f9f88" stroke-width="1.1"/>
<path d="M370.4 154.8 H389 L384 159.7 L389 164.5 H370.4" fill="none" stroke="#3cb88a" stroke-width="1.1"/>
<circle cx="525.8" cy="219" r="9.6" fill="none" stroke="#6f9f88" stroke-width="1.1"/>
<path d="M542 214.5 H523.2 L528.2 219 L523.2 223.5 H542" fill="none" stroke="#3cb88a" stroke-width="1.1"/>
<g fill="none" stroke="#2a2a2a" stroke-width="1.2">
<path d="M386.3 149.8 V138.4 H431"/><path d="M436 138.4 H440" stroke="#55a880"/>
<path d="M386.3 169.4 V186.2 M323 310.8 V186.2 H438"/>
<path d="M323 310.8 H263"/>
<path d="M525.8 209.4 V194 H480"/>
<path d="M525.8 228.6 V244.5 M475 244.5 H547.2 V269.7 H563"/>
<path d="M833.1 171 V276.2 H846.6 V375"/>
<path d="M890 147.5 V263.3 H862.2 V374"/>
<path d="M917.3 148.5 V278.2 H878.6 V374"/>
</g>
<g fill="#1a1a1a">
<path d="M436 138.4 L430.5 136 V140.8 Z"/>
<path d="M259 310.8 L266 308 V313.6 Z"/>
<path d="M477.5 194 L483 191.6 V196.4 Z"/>
<path d="M568.5 269.7 L561.5 266.9 V272.5 Z"/>
<path d="M846.6 379.5 L843.8 373.3 H849.4 Z"/>
<path d="M862.2 378.5 L859.4 372.3 H865 Z"/>
<path d="M878.6 378.5 L875.8 372.3 H881.4 Z"/>
<path d="M725.8 106.8 L723 113.5 H728.6 Z"/>
<path d="M822 163.5 L815.5 160.7 V166.3 Z"/>
</g>
<g fill="none" stroke="#3a3a3a" stroke-width="1.2" stroke-dasharray="2.6 1.7">
<path d="M477 121 H725.8 V113"/>
<path d="M793.4 159 V163.5 H816"/>
<path d="M846 98.5 H868"/>
<path d="M897.4 114.7 H911"/>
</g>
<path d="M874 134 V140 H884" fill="none" stroke="#333" stroke-width="1.1"/>
<g fill="none" stroke="#dc2840" stroke-width="1.15" stroke-dasharray="1.8 1.1">
<path d="M326 107.3 H382.7 V101.1 H433"/>
<path d="M735 57.4 H753.7 V83 H766"/>
<path d="M262.3 420 H341.3 V460.3 H413"/>
</g>
<g fill="#e0202e">
<path d="M439.6 101.1 L433.5 98.2 V104 Z"/>
<path d="M771.8 83 L766 80.3 V85.7 Z"/>
<path d="M420 460.3 L414 457.4 V463.2 Z"/>
</g>
<g fill="none" stroke="#e8843a" stroke-width="1.2">
<path d="M268.4 483.3 H345.2 V512.7 H416"/>
<path d="M528.8 545 V369.5 H557"/>
<path d="M475 538 V545 H528.8"/>
</g>
<g fill="#e8843a">
<path d="M563.5 369.5 L556 366.2 V372.8 Z"/>
<path d="M422.6 513 L415 509.7 V516.3 Z"/>
<path d="M528.8 437 L526 444 H531.6 Z"/>
</g>
<g fill="none" stroke="#4aa888" stroke-width="1.1">
<rect x="718.9" y="91.8" width="10.6" height="11.1"/>
<path d="M718.9 91.8 L729.5 102.9"/>
<path d="M715 97.3 L719 95 V99.5 Z"/>
<path d="M729.5 91.8 L755.5 96.3 L782.4 91 M729.5 102.9 L755.5 98 L782.4 102.5"/>
<rect x="782.4" y="91" width="4.5" height="11.5"/>
<rect x="719.5" y="99.5" width="9.5" height="3.2" fill="#8cc8b0"/>
<rect x="788.7" y="91.4" width="10.3" height="11"/>
<path d="M799 91.4 L788.7 102.4"/>
<path d="M788.7 102.4 L793.2 126.6 L788.7 154 M799 102.4 L794.2 126.6 L799 154"/>
<rect x="787.8" y="154" width="12" height="4"/>
<path d="M793.8 91.4 V88"/>
<path d="M821.6 160 V98 A12.2 7.2 0 0 1 846 98 V164 A12.2 7.6 0 0 1 821.6 164 Z"/>
<rect x="869" y="94" width="9" height="8"/>
<path d="M869 94 L878 102 M869 102 L873.5 117 L869 130 M878 102 L874 117 L878 130"/>
<rect x="868.5" y="130" width="10" height="3"/>
<path d="M884 147 V118 A6.7 5 0 0 1 897.4 118 V142 A6.7 5.4 0 0 1 884 142 Z"/>
<rect x="911.5" y="110" width="9" height="8"/>
<path d="M911.5 110 L920.5 118 M911.5 118 L915.8 133 L911.5 145.5 M920.5 118 L916 133 L920.5 145.5"/>
<rect x="911" y="145.5" width="10" height="3.2"/>
</g>
<rect x="818" y="103.6" width="31" height="2" fill="#14a650"/>
<rect x="882.5" y="117.2" width="16.5" height="1.8" fill="#14a650"/>
<text x="878" y="71.6" class="t" style="font-size:6.6px;fill:#333" textLength="28.4" lengthAdjust="spacingAndGlyphs">VACUUM</text>
<text x="878" y="80.7" class="t" style="font-size:6.6px;fill:#333" textLength="24.9" lengthAdjust="spacingAndGlyphs">SYSTEM</text>
<rect x="697.5" y="496.5" width="276" height="60" fill="#fff" stroke="#333" stroke-width="1"/>
<rect x="699.6" y="498.6" width="271.5" height="60" fill="none" stroke="#888" stroke-width="1"/>
<path d="M699.6 531.6 H971 M699.6 544.2 H971 M764.7 531.6 V552" stroke="#222" stroke-width="1.1"/>
<text x="704.7" y="540" class="t" style="font-size:7.1px;fill:#222">PROJECT</text>
<text x="768.7" y="540" class="t" style="font-size:7.3px;fill:#222" textLength="166" lengthAdjust="spacingAndGlyphs">Deodorization/Physical Refining + Double Scrubber</text>
<text x="704.7" y="553.8" class="t" style="font-size:7.1px;fill:#222">DESCRIPTION</text>
<text x="768.7" y="553.8" class="t" style="font-size:7.1px;fill:#222">Simplified Flow Diagram (SFD) Deodorization</text>
<text x="835" y="518.6" text-anchor="middle" class="t" style="font-size:9.5px;fill:#222">abc</text>
<defs><linearGradient id="drop" x1="0" y1="0" x2="0" y2="1"><stop offset="0" stop-color="#f0c020"/><stop offset="0.6" stop-color="#d8b040"/><stop offset="1" stop-color="#8cc040"/></linearGradient><radialGradient id="coco" cx="0.42" cy="0.42" r="0.6"><stop offset="0" stop-color="#f8f860"/><stop offset="0.35" stop-color="#c8e040"/><stop offset="0.7" stop-color="#50b030"/><stop offset="1" stop-color="#2a9a2a"/></radialGradient><linearGradient id="tabg" x1="0" y1="0" x2="0" y2="1"><stop offset="0" stop-color="#dfeafa"/><stop offset="1" stop-color="#b4cbee"/></linearGradient></defs>
<path d="M709 503 C706 509 703 511 703 515 C703 518.5 706 520 709 520 C713 520 716 518 716 515 C716 511 711 508 709 503 Z" fill="url(#drop)"/>
<path d="M706 519 C709 515 713 513 716 514 C715 518 711 520 706 519 Z" fill="#8cc640"/>
<text x="715.3" y="511.8" style="font-family:Liberation Serif,serif;font-weight:bold;font-size:7.2px;fill:#14206a;stroke:#14206a;stroke-width:0.2px" textLength="40.5" lengthAdjust="spacingAndGlyphs">ProSimTechs</text>
<rect x="716" y="513.6" width="37" height="0.7" fill="#b8bcc8"/>
<ellipse cx="709" cy="523" rx="5" ry="2.2" fill="#e4f0c8" opacity="0.8"/>
<text x="922.5" y="509.5" class="tb" style="font-size:4.2px;fill:#333" textLength="24" lengthAdjust="spacingAndGlyphs">Powered by</text>
<circle cx="944" cy="520.5" r="6" fill="url(#coco)"/>
<text x="952.2" y="521.9" class="tb" style="font-size:6.2px;fill:#333" textLength="14.3" lengthAdjust="spacingAndGlyphs">coco</text>
<rect x="3" y="551" width="991" height="11.8" fill="#a8c0e4"/>
<rect x="3" y="551" width="47" height="11.5" fill="url(#tabg)"/>
<path d="M50 551 V562.5" stroke="#8aa0c4" stroke-width="0.8"/>
<g fill="#2f4f8a">
<rect x="8" y="553.8" width="1.3" height="5.8"/><path d="M9.5 556.7 L13 553.8 V559.6 Z"/>
<path d="M19.5 556.7 L23 553.8 V559.6 Z"/>
<path d="M33.5 556.7 L30 553.8 V559.6 Z"/>
<path d="M43 556.7 L39.5 553.8 V559.6 Z"/><rect x="43.3" y="553.8" width="1.3" height="5.8"/>
</g>
<path d="M50 551 H704 L697 562.3 H50 Z" fill="url(#tabg)"/>
<path d="M186 551.5 L179 562" stroke="#a2b6d4" stroke-width="0.9"/>
<path d="M541.4 551.5 L534.4 562" stroke="#a2b6d4" stroke-width="0.9"/>
<path d="M590.5 551.5 L583.5 562" stroke="#a2b6d4" stroke-width="0.9"/>
<path d="M625.6 551.5 L618.6 562" stroke="#a2b6d4" stroke-width="0.9"/>
<path d="M678.9 551.5 L671.9 562" stroke="#a2b6d4" stroke-width="0.9"/>
<path d="M326.2 550.5 H447 L440 562.3 H326.2 Z" fill="#fff"/>
<path d="M447 551 L440 562.3" stroke="#a2b6d4" stroke-width="0.9"/>
<g class="t" style="font-size:9.6px;fill:#3a5d9e;stroke:#3a5d9e;stroke-width:0.12px">
<text x="65.5" y="560.6" textLength="103.5" lengthAdjust="spacingAndGlyphs">Process Simulation Model</text>
<text x="194.5" y="560.6" textLength="119.8" lengthAdjust="spacingAndGlyphs">SFD (Enzymatic Degumming)</text>
<text x="456.3" y="560.6" textLength="67.3" lengthAdjust="spacingAndGlyphs">Detailed Studies</text>
<text x="542.4" y="560.6" textLength="33.6" lengthAdjust="spacingAndGlyphs">Streams</text>
<text x="591" y="560.6" textLength="21.6" lengthAdjust="spacingAndGlyphs">OpEx</text>
<text x="626.6" y="560.6" textLength="37.9" lengthAdjust="spacingAndGlyphs">OpEx (2)</text>
</g>
<text x="333.5" y="560.6" class="tb" style="font-size:9.6px;fill:#1f3566" textLength="106" lengthAdjust="spacingAndGlyphs">SFD (Physical Refining)</text>
<rect x="682" y="554.5" width="8" height="6" fill="#f4f4f4" stroke="#7a8aa0" stroke-width="0.8"/>
<circle cx="682.5" cy="554.5" r="1.6" fill="#f0c030"/>
</svg></body></html>
